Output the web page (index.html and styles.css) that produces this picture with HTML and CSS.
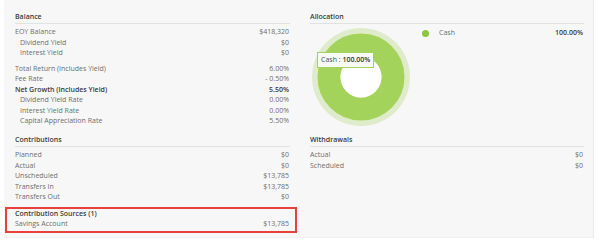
FILE: index.html
```html
<!DOCTYPE html>
<html>
<head>
<meta charset="utf-8">
<link rel="stylesheet" href="styles.css">
</head>
<body>
<div class="panel">
  <div class="grid">
    <section class="sec">
      <div class="hdr">Balance</div>
      <div class="rows">
        <div class="row"><span>EOY Balance</span><span>$418,320</span></div>
        <div class="row sub"><span>Dividend Yield</span><span>$0</span></div>
        <div class="row sub"><span>Interest Yield</span><span>$0</span></div>
      </div>
      <div class="rows gap">
        <div class="row"><span>Total Return (Includes Yield)</span><span>6.00%</span></div>
        <div class="row"><span>Fee Rate</span><span>- 0.50%</span></div>
        <div class="row strong"><span>Net Growth (Includes Yield)</span><span>5.50%</span></div>
        <div class="row sub"><span>Dividend Yield Rate</span><span>0.00%</span></div>
        <div class="row sub"><span>Interest Yield Rate</span><span>0.00%</span></div>
        <div class="row sub"><span>Capital Appreciation Rate</span><span>5.50%</span></div>
      </div>
    </section>
    <section class="sec">
      <div class="hdr">Allocation</div>
      <div class="alloc">
        <div class="chart">
          <svg width="100" height="100" viewBox="0 0 100 100">
            <circle cx="50" cy="50" r="49" fill="#dfeccc"/>
            <circle cx="50" cy="50" r="32" fill="none" stroke="#a3d35b" stroke-width="23"/>
            <circle cx="50" cy="50" r="20.5" fill="#ffffff"/>
          </svg>
          <div class="tip">Cash : <b>100.00%</b></div>
        </div>
        <div class="legend">
          <div class="lrow"><span class="dot"></span><span class="lname">Cash</span><span class="lval">100.00%</span></div>
        </div>
      </div>
    </section>
    <section class="sec">
      <div class="hdr">Contributions</div>
      <div class="rows">
        <div class="row"><span>Planned</span><span>$0</span></div>
        <div class="row"><span>Actual</span><span>$0</span></div>
        <div class="row"><span>Unscheduled</span><span>$13,785</span></div>
        <div class="row"><span>Transfers In</span><span>$13,785</span></div>
        <div class="row"><span>Transfers Out</span><span>$0</span></div>
      </div>
      <div class="sources">
        <div class="shdr">Contribution Sources (1)</div>
        <div class="row"><span>Savings Account</span><span>$13,785</span></div>
      </div>
    </section>
    <section class="sec">
      <div class="hdr">Withdrawals</div>
      <div class="rows">
        <div class="row"><span>Actual</span><span>$0</span></div>
        <div class="row"><span>Scheduled</span><span>$0</span></div>
      </div>
    </section>
  </div>
</div>
</body>
</html>
```
FILE: styles.css
```css
html, body {
  margin: 0;
  padding: 0;
  background: #ffffff;
}
body {
  font-family: "Open Sans", "Liberation Sans", sans-serif;
  font-size: 7px;
  color: #6e6e6e;
}
.panel {
  margin-left: 4px;
  width: 590px;
  height: 238px;
  box-sizing: border-box;
  background: #f7f7f7;
  border-right: 1px solid #ebebeb;
  border-bottom: 1px solid #efefef;
  padding: 11px 10px 0 11px;
}
.grid {
  display: grid;
  grid-template-columns: 275px 274px;
  column-gap: 20px;
  row-gap: 7px;
}
.hdr {
  color: #3a3a3a;
  font-weight: 600;
  line-height: 11px;
  padding-bottom: 1px;
  border-bottom: 1px solid #e2e2e2;
  margin-bottom: 3px;
}
.rows.gap {
  margin-top: 5px;
}
.row {
  display: flex;
  justify-content: space-between;
  line-height: 10.5px;
  padding-right: 1px;
}
.row.sub span:first-child {
  padding-left: 5px;
}
.row.strong {
  color: #3a3a3a;
  font-weight: 600;
}
.sources {
  margin: 4px -7px 0 -10px;
  border: 2px solid #e8403f;
  padding: 0 5px 1px 8px;
}
.shdr {
  color: #3a3a3a;
  font-weight: 600;
  line-height: 10.5px;
}
.alloc {
  display: flex;
}
.chart {
  position: relative;
  width: 100px;
  height: 100px;
  margin-left: 1px;
}
.chart svg {
  display: block;
}
.tip {
  position: absolute;
  left: 6px;
  top: 25px;
  background: #f8fbf4;
  border: 1px solid #a3d35b;
  color: #4a4a4a;
  line-height: 14px;
  padding: 0 3px;
  white-space: nowrap;
}
.tip b {
  font-weight: 600;
  color: #333;
}
.legend {
  flex: 1;
  margin-left: 11px;
}
.lrow {
  display: flex;
  align-items: center;
  line-height: 10px;
  margin-top: 1px;
}
.dot {
  width: 7px;
  height: 7px;
  border-radius: 50%;
  background: #8cc63f;
}
.lname {
  margin-left: 10px;
  flex: 1;
}
.lval {
  color: #3a3a3a;
  font-weight: 600;
  padding-right: 1px;
}
```
